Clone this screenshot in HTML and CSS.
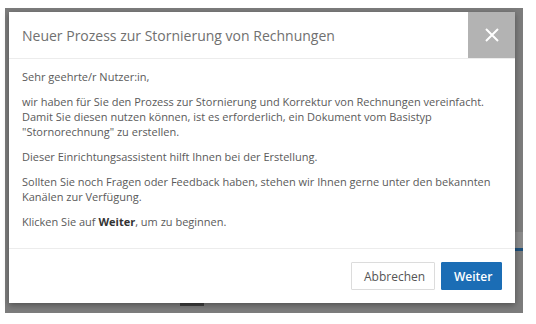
FILE: index.html
```html
<!DOCTYPE html>
<html lang="de">
<head>
  <meta charset="UTF-8" />
  <title>Stornierung</title>
  <link rel="stylesheet" href="styles.css">
</head>
<body>

  <!-- dimmed page behind the dialog -->
  <div class="backdrop">
    <div class="page-bit bar-bottom"></div>
    <div class="page-bit bar-side"></div>
    <div class="page-bit blue-side"></div>

    <div class="modal">
      <header class="modal-header">
        <h2>Neuer Prozess zur Stornierung von Rechnungen</h2>
        <button class="close-btn" aria-label="Schließen">
          <svg width="16" height="16" viewBox="0 0 16 16">
            <path d="M2 2 L14 14 M14 2 L2 14" stroke="#fff" stroke-width="2" fill="none"/>
          </svg>
        </button>
      </header>

      <div class="modal-body">
        <p>Sehr geehrte/r Nutzer:in,</p>
        <p>wir haben für Sie den Prozess zur Stornierung und Korrektur von Rechnungen vereinfacht. Damit Sie diesen nutzen können, ist es erforderlich, ein Dokument vom Basistyp "Stornorechnung" zu erstellen.</p>
        <p>Dieser Einrichtungsassistent hilft Ihnen bei der Erstellung.</p>
        <p>Sollten Sie noch Fragen oder Feedback haben, stehen wir Ihnen gerne unter den bekannten Kanälen zur Verfügung.</p>
        <p>Klicken Sie auf <strong>Weiter</strong>, um zu beginnen.</p>
      </div>

      <footer class="modal-footer">
        <button class="btn btn-cancel">Abbrechen</button>
        <button class="btn btn-primary">Weiter</button>
      </footer>
    </div>
  </div>

</body>
</html>
```

FILE: styles.css
```css
body {
  margin: 0;
  background: #fff;
  font-family: "Open Sans", "Noto Sans", sans-serif;
}

.backdrop {
  position: relative;
  margin: 8px 13px 0 5px;
  height: 305px;
  background: #7c7c7c;
  padding: 4px 8px 0 4px;
  box-sizing: border-box;
}

/* bits of the page showing through the overlay */
.page-bit {
  position: absolute;
}

.bar-bottom {
  left: 175px;
  top: 295px;
  width: 24px;
  height: 3px;
  background: #3f3f3f;
}

.bar-side {
  right: 0;
  top: 224px;
  width: 8px;
  height: 16px;
  background: #8a8a8a;
}

.blue-side {
  right: 0;
  top: 240px;
  width: 8px;
  height: 3px;
  background: #1d4f7a;
}

.modal {
  position: relative;
  background: #fff;
  width: 506px;
  box-shadow: 0 2px 6px rgba(0, 0, 0, 0.35);
}

.modal-header {
  display: flex;
  align-items: center;
  justify-content: space-between;
  height: 46px;
  border-bottom: 1px solid #ececec;
}

.modal-header h2 {
  margin: 0 0 0 13px;
  font-size: 14px;
  font-weight: normal;
  color: #707070;
}

.close-btn {
  width: 47px;
  height: 46px;
  border: none;
  background: #b3b3b3;
  display: flex;
  align-items: center;
  justify-content: center;
  padding: 0;
}

.modal-body {
  padding: 10px 13px 9px 13px;
  font-size: 11px;
  line-height: 15px;
  color: #5a5a5a;
}

.modal-body p {
  margin: 0 0 10px 0;
}

.modal-body strong {
  color: #333;
}

.modal-footer {
  display: flex;
  justify-content: flex-end;
  gap: 6px;
  padding: 13px;
  border-top: 1px solid #ececec;
}

.btn {
  font-family: "Open Sans", "Noto Sans", sans-serif;
  font-size: 12px;
  height: 28px;
  padding: 0 12px;
  border-radius: 1px;
}

.btn-cancel {
  background: #fff;
  color: #555;
  border: 1px solid #dcdcdc;
  width: 84px;
}

.btn-primary {
  background: #1b6db5;
  color: #fff;
  border: 1px solid #1b6db5;
  font-weight: 600;
  width: 61px;
}
```
